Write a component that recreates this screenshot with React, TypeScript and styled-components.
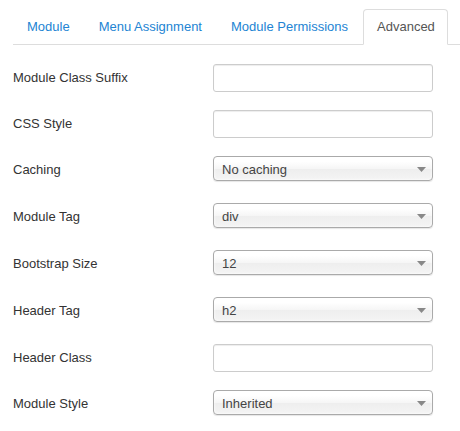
import React from "react";
import styled, { createGlobalStyle } from "styled-components";

const Global = createGlobalStyle`
  html, body { margin: 0; padding: 0; background: #fff; }
  body { font-family: "Liberation Sans", Arial, sans-serif; font-size: 13px; line-height: 18px; color: #333; }
  * { box-sizing: border-box; }
`;

const Page = styled.div`
  padding: 9px 0 0 13px;
`;

const Tabs = styled.ul`
  display: flex;
  list-style: none;
  margin: 0;
  padding: 0;
  border-bottom: 1px solid #ddd;
`;

const Tab = styled.li<{ $active?: boolean }>`
  margin: 0 2px -1px 0;
  padding: 8px 12px 8px 13px;
  line-height: 18px;
  border: 1px solid ${(p) => (p.$active ? "#ddd" : "transparent")};
  border-bottom-color: ${(p) => (p.$active ? "#fff" : "transparent")};
  border-radius: 4px 4px 0 0;
  background: ${(p) => (p.$active ? "#fff" : "transparent")};
  color: ${(p) => (p.$active ? "#555" : "#2384d3")};
  cursor: pointer;
  white-space: nowrap;
`;

const Form = styled.div`
  display: flex;
  flex-direction: column;
  gap: 18px;
  margin-top: 19px;
`;

const Row = styled.div<{ $select?: boolean }>`
  display: flex;
  align-items: flex-start;
  height: ${(p) => (p.$select ? 29 : 28)}px;
`;

const Label = styled.label`
  width: 200px;
  flex: none;
  padding-top: 5px;
  line-height: 18px;
  color: #333;
`;

const Input = styled.input`
  width: 220px;
  height: 28px;
  padding: 4px 6px;
  font: inherit;
  line-height: 18px;
  color: #555;
  border: 1px solid #ccc;
  border-radius: 3px;
  background: #fff;
  box-shadow: inset 0 1px 1px rgba(0, 0, 0, 0.075);
  outline: none;
`;

const Select = styled.div`
  position: relative;
  width: 220px;
  height: 25px;
  padding: 0 0 0 8px;
  line-height: 25px;
  color: #444;
  border: 1px solid #aaa;
  border-radius: 4px;
  background: linear-gradient(to bottom, #fff 20%, #f6f6f6 50%, #eee 52%, #f4f4f4 100%);
  box-shadow: inset 0 0 3px #fff, 0 1px 1px rgba(0, 0, 0, 0.1);
  cursor: pointer;
`;

const Arrow = styled.svg`
  position: absolute;
  right: 5px;
  top: 10px;
`;

type Field = { label: string; value?: string; select?: boolean };

const fields: Field[] = [
  { label: "Module Class Suffix" },
  { label: "CSS Style" },
  { label: "Caching", value: "No caching", select: true },
  { label: "Module Tag", value: "div", select: true },
  { label: "Bootstrap Size", value: "12", select: true },
  { label: "Header Tag", value: "h2", select: true },
  { label: "Header Class" },
  { label: "Module Style", value: "Inherited", select: true },
];

const tabs = ["Module", "Menu Assignment", "Module Permissions", "Advanced"];

export default function App() {
  return (
    <Page>
      <Global />
      <Tabs>
        {tabs.map((t) => (
          <Tab key={t} $active={t === "Advanced"}>
            {t}
          </Tab>
        ))}
      </Tabs>
      <Form>
        {fields.map((f) => (
          <Row key={f.label} $select={f.select}>
            <Label>{f.label}</Label>
            {f.select ? (
              <Select>
                {f.value}
                <Arrow width="10" height="5" viewBox="0 0 10 5">
                  <path d="M0 0 H9 L4.5 5 Z" fill="#888" />
                </Arrow>
              </Select>
            ) : (
              <Input type="text" />
            )}
          </Row>
        ))}
      </Form>
    </Page>
  );
}
